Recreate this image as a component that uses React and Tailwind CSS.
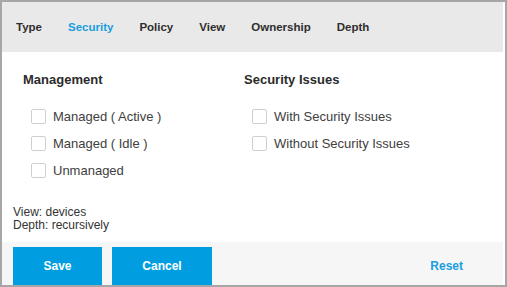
const tabs = ["Type", "Security", "Policy", "View", "Ownership", "Depth"];

function Check({ label }) {
  return (
    <label className="flex h-[27px] items-center gap-[7px] pl-2">
      <span className="h-[15px] w-[15px] rounded-[2px] border border-[#cfcfcf] bg-white" />
      <span className="text-[13px] text-[#404040]">{label}</span>
    </label>
  );
}

function Column({ title, items }) {
  return (
    <div className="w-[221px]">
      <div className="text-[13px] font-bold leading-[15px] text-[#2b2b2b]">{title}</div>
      <div className="mt-4 flex flex-col">
        {items.map((i) => (
          <Check key={i} label={i} />
        ))}
      </div>
    </div>
  );
}

export default function App() {
  return (
    <div className="h-[287px] w-[507px] border-2 border-[#a6a6a6] bg-white pr-[2px] font-['Liberation_Sans',Arial,sans-serif]">
      <div className="flex h-full flex-col">
        <div className="flex h-[50px] items-center gap-[26px] bg-[#e9e9e9] pl-[14px] pt-[1px] text-[11.5px] font-bold text-[#2e2e2e]">
          {tabs.map((t) => (
            <span key={t} className={t === "Security" ? "text-[#1a9de0]" : ""}>
              {t}
            </span>
          ))}
        </div>

        <div className="flex pl-[21px] pt-[20px]">
          <Column title="Management" items={["Managed ( Active )", "Managed ( Idle )", "Unmanaged"]} />
          <Column title="Security Issues" items={["With Security Issues", "Without Security Issues"]} />
        </div>

        <div className="flex flex-1 flex-col justify-end pb-[10px] pl-[11px] text-[12px] leading-[13px] text-[#333]">
          <div>View: devices</div>
          <div>Depth: recursively</div>
        </div>

        <div className="flex h-[43px] items-start bg-[#f6f6f6] pl-[11px] pt-[5px]">
          <button className="h-[38px] w-[89px] bg-[#009ee0] text-[12px] font-bold text-white">Save</button>
          <button className="ml-[10px] h-[38px] w-[100px] bg-[#009ee0] text-[12px] font-bold text-white">Cancel</button>
          <button className="ml-auto mr-[40px] h-[38px] text-[12px] font-bold text-[#1a9de0]">Reset</button>
        </div>
      </div>
    </div>
  );
}
